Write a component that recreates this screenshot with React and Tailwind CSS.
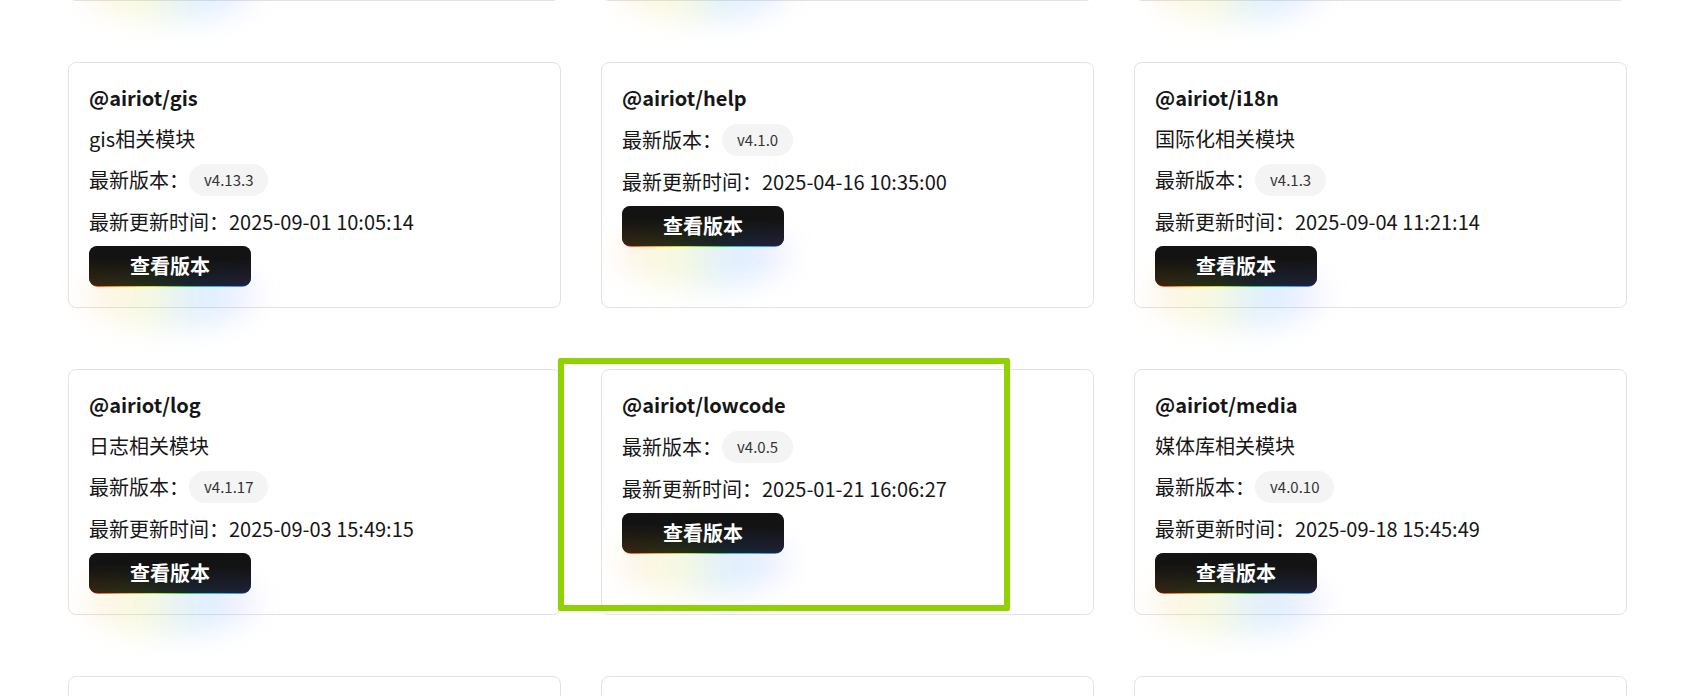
import React from "react";

const packages = [
  { name: "@airiot/flow", desc: "流程相关模块", version: "v4.2.1", time: "2025-08-12 14:20:31" },
  { name: "@airiot/form", desc: "表单相关模块", version: "v4.3.0", time: "2025-08-28 09:12:45" },
  { name: "@airiot/gateway", desc: "网关相关模块", version: "v4.1.6", time: "2025-07-30 17:40:02" },
  { name: "@airiot/gis", desc: "gis相关模块", version: "v4.13.3", time: "2025-09-01 10:05:14" },
  { name: "@airiot/help", version: "v4.1.0", time: "2025-04-16 10:35:00" },
  { name: "@airiot/i18n", desc: "国际化相关模块", version: "v4.1.3", time: "2025-09-04 11:21:14" },
  { name: "@airiot/log", desc: "日志相关模块", version: "v4.1.17", time: "2025-09-03 15:49:15" },
  { name: "@airiot/lowcode", version: "v4.0.5", time: "2025-01-21 16:06:27", marked: true },
  { name: "@airiot/media", desc: "媒体库相关模块", version: "v4.0.10", time: "2025-09-18 15:45:49" },
  { name: "@airiot/message", desc: "消息相关模块", version: "v4.1.2", time: "2025-08-20 10:11:09" },
  { name: "@airiot/report", desc: "报表相关模块", version: "v4.2.4", time: "2025-09-10 16:30:22" },
  { name: "@airiot/rule", desc: "规则相关模块", version: "v4.1.8", time: "2025-09-05 13:02:40" },
];

function ViewButton() {
  return (
    <div className="relative w-[162px] h-[41px]">
      {/* soft rainbow glow under the button */}
      <div className="pointer-events-none absolute left-[-4px] top-[16px] w-[172px] h-[66px] rounded-[50%] blur-[14px] bg-[linear-gradient(90deg,rgba(255,160,70,0.14),rgba(215,225,70,0.18),rgba(90,175,255,0.2),rgba(150,140,255,0.14))]" />
      <div className="relative z-10 h-full rounded-[9px] pb-[1.5px] bg-[linear-gradient(90deg,#ff3d3d,#ffa61a,#c8e02a,#3ecf6a,#31b8ff,#4d7dff)]">
        <button className="relative flex h-full w-full items-center justify-center overflow-hidden rounded-[8px] bg-[#131313] text-[20px] font-bold text-white">
          <span className="absolute inset-0 bg-[linear-gradient(90deg,rgba(110,70,20,0.4),rgba(70,90,30,0.4),rgba(30,60,90,0.45),rgba(60,60,120,0.35))] [mask-image:linear-gradient(to_top,#000,transparent_70%)]" />
          <span className="relative">查看版本</span>
        </button>
      </div>
    </div>
  );
}

function PackageCard({ pkg }) {
  return (
    <div className="relative rounded-lg border border-[#e3e3e3] bg-white p-5 text-[#161616]">
      <div className="mb-[11px] text-[20px] font-bold leading-[30px]">{pkg.name}</div>
      {pkg.desc && <div className="mb-[10px] text-[20px] leading-[30px]">{pkg.desc}</div>}
      <div className="mb-[11px] flex h-8 items-center text-[20px] leading-[30px]">
        <span>最新版本：</span>
        <span className="inline-flex h-8 items-center rounded-full bg-[#f4f4f4] px-[15px] text-[15px] text-[#333]">
          {pkg.version}
        </span>
      </div>
      <div className="mb-[9px] text-[20px] leading-[30px]">最新更新时间：{pkg.time}</div>
      <ViewButton />
      {pkg.marked && (
        <div className="pointer-events-none absolute left-[-44px] top-[-12px] z-20 h-[253px] w-[452px] rounded-[2px] border-[6px] border-[#8ed300]" />
      )}
    </div>
  );
}

export default function App() {
  return (
    <div className="h-[696px] overflow-hidden bg-white font-['Noto_Sans_CJK_SC','Noto_Sans',sans-serif]">
      <div className="-mt-[245px] grid grid-cols-[repeat(3,493px)] gap-x-10 gap-y-[61px] pl-[68px]">
        {packages.map((pkg) => (
          <PackageCard key={pkg.name} pkg={pkg} />
        ))}
      </div>
    </div>
  );
}
